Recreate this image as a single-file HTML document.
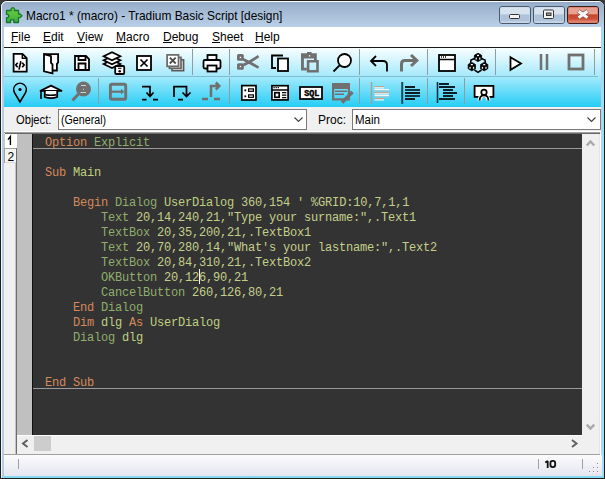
<!DOCTYPE html>
<html><head><meta charset="utf-8">
<style>
*{margin:0;padding:0;box-sizing:border-box}
html,body{width:605px;height:479px;overflow:hidden;background:#3a3a3a}
body{position:relative;font-family:"Liberation Sans",sans-serif;font-size:12px;color:#000}
.a{position:absolute}
#frame{left:0;top:0;width:605px;height:479px;border:1px solid #1c1c1c;border-radius:7px 7px 0 0;background:#b4cce4}
#hl{left:1px;top:1px;width:603px;height:477px;border-top:1px solid #fff;border-left:1px solid #f4f8fc;border-radius:6px 6px 0 0}
#rfr{left:601px;top:27px;width:3px;height:451px;background:linear-gradient(90deg,#b8d4e8 0,#b8d4e8 1px,#a0dcf8 1px)}
#rfr2{left:599px;top:134px;width:2px;height:321px;background:linear-gradient(90deg,#e2e6ea 0,#e2e6ea 1px,#fff 1px)}
#bfr{left:2px;top:476px;width:602px;height:2px;background:#88d8f4}
#tbar{left:2px;top:2px;width:602px;height:25px;border-radius:5px 5px 0 0;background:linear-gradient(#96adc9,#bad0e8)}
#title{left:26px;top:9px;font-size:11.9px;color:#000;white-space:nowrap}
#client{left:4px;top:27px;width:597px;height:449px;background:#f0f0f0}
#menu{left:4px;top:27px;width:597px;height:20px;background:#fff}
#menu span{position:absolute;top:3px}
#menu u{text-decoration:none;position:relative}
#menu u:after{content:"";position:absolute;left:0;right:0;top:12px;height:1px;background:#000}
#mline{left:4px;top:47px;width:597px;height:1px;background:#1a1a1a}
#tb1{left:4px;top:48px;width:597px;height:29px;background:linear-gradient(#f8feff,#a6e9fb 28px,#a2eafc 28px)}
#tbl{left:4px;top:76px;width:594px;height:1px;background:#80bccf}
#tb2{left:4px;top:77px;width:597px;height:30px;background:linear-gradient(#a2eafc,#26cdf5)}
#objbar{left:4px;top:107px;width:597px;height:25px;background:#f0f0f0}
.combo{position:absolute;top:109px;height:21px;background:#fff;border:1px solid #7a7a7a}
.lbl{position:absolute;white-space:nowrap;transform-origin:0 0}
#edtop1{left:4px;top:131px;width:597px;height:1px;background:#fff}
#edtop2{left:4px;top:132px;width:596px;height:1px;background:#a0a0a0}
#edtop3{left:5px;top:133px;width:595px;height:1px;background:#696969}
#tabs{left:4px;top:134px;width:12px;height:320px;background:#f0f0f0}
#gut{left:16px;top:134px;width:16px;height:301px;background:#c0c0c0;border-left:1px solid #808080}
#ed{left:32px;top:134px;width:550px;height:301px;background:#333;overflow:hidden;border-left:1px solid #101010}
#code{position:absolute;left:12px;top:2px;font-family:"Liberation Mono",monospace;font-size:12px;letter-spacing:-0.2px;line-height:15px;white-space:pre;color:#c8d48c}
.sep{position:absolute;left:0px;width:549px;height:1px;background:#9a9a9a}
.k{color:#d4895a}.g{color:#90ae6c}.l{color:#bfd181}.n{color:#c4d08a}
#vs{left:582px;top:134px;width:17px;height:301px;background:#f0f0f0}
#hs{left:17px;top:435px;width:582px;height:19px;background:linear-gradient(90deg,#fff 0,#fff 565px,#f0f0f0 565px) top/100% 1px no-repeat,#f0f0f0}
#hsline{left:4px;top:454px;width:596px;height:1px;background:#a0a0a0}
#status{left:4px;top:455px;width:598px;height:21px;background:linear-gradient(#fcfcfd,#e4e5ef)}
svg{position:absolute;left:0;top:0}
</style></head><body>
<div id="frame" class="a"></div>
<div id="hl" class="a"></div>
<div id="rfr" class="a"></div>
<div id="bfr" class="a"></div>
<div id="tbar" class="a"></div>
<div id="title" class="a">Macro1 * (macro) - Tradium Basic Script [design]</div>
<div id="client" class="a"></div>
<div id="menu" class="a">
<span style="left:7px"><u>F</u>ile</span>
<span style="left:39px"><u>E</u>dit</span>
<span style="left:73px"><u>V</u>iew</span>
<span style="left:112px"><u>M</u>acro</span>
<span style="left:159px"><u>D</u>ebug</span>
<span style="left:208px"><u>S</u>heet</span>
<span style="left:251px"><u>H</u>elp</span>
</div>
<div id="mline" class="a"></div>
<div id="tb1" class="a"></div>
<div id="tbl" class="a"></div>
<div id="tb2" class="a"></div>
<div id="objbar" class="a"></div>
<div class="lbl" style="left:16px;top:113px;transform:scaleX(0.93)">Object:</div>
<div class="combo" style="left:58px;width:249px"><span class="lbl" style="left:2px;top:3px;transform:scaleX(0.89)">(General)</span></div>
<div class="lbl" style="left:318px;top:113px;transform:scaleX(1.0)">Proc:</div>
<div class="combo" style="left:352px;width:249px"><span class="lbl" style="left:1.5px;top:3px;transform:scaleX(0.96)">Main</span></div>
<div id="edtop1" class="a"></div>
<div id="edtop2" class="a"></div>
<div id="edtop3" class="a"></div>
<div id="tabs" class="a"></div>
<div id="gut" class="a"></div>
<div id="ed" class="a">
<div class="sep" style="top:14px"></div>
<div class="sep" style="top:254px"></div>
<div id="code"><span class="k">Option</span> <span class="g">Explicit</span>

<span class="k">Sub</span> <span class="l">Main</span>

    <span class="k">Begin</span> <span class="g">Dialog</span> <span class="l">UserDialog</span> <span class="n">360,154 ' %GRID:10,7,1,1</span>
        <span class="g">Text</span> <span class="n">20,14,240,21,"Type your surname:",.Text1</span>
        <span class="g">TextBox</span> <span class="n">20,35,200,21,.TextBox1</span>
        <span class="g">Text</span> <span class="n">20,70,280,14,"What's your lastname:",.Text2</span>
        <span class="g">TextBox</span> <span class="n">20,84,310,21,.TextBox2</span>
        <span class="g">OKButton</span> <span class="n">20,126,90,21</span>
        <span class="g">CancelButton</span> <span class="n">260,126,80,21</span>
    <span class="k">End</span> <span class="g">Dialog</span>
    <span class="k">Dim</span> <span class="l">dlg</span> <span class="k">As</span> <span class="l">UserDialog</span>
    <span class="g">Dialog</span> <span class="l">dlg</span>


<span class="k">End</span> <span class="k">Sub</span></div>
</div>
<div id="vs" class="a"></div>
<div id="rfr2" class="a"></div>
<div id="hs" class="a"></div>
<div id="hsline" class="a"></div>
<div id="status" class="a"></div>


<svg width="605" height="479" viewBox="0 0 605 479">
<defs><linearGradient id="pg" x1="0" y1="0" x2="0" y2="1"><stop offset="0" stop-color="#5cc844"/><stop offset="0.5" stop-color="#58c03c"/><stop offset="1" stop-color="#34a844"/></linearGradient><linearGradient id="cg" x1="0" y1="0" x2="0" y2="1"><stop offset="0" stop-color="#c44428"/><stop offset="0.55" stop-color="#cc5036"/><stop offset="1" stop-color="#e89480"/></linearGradient></defs>
<!-- app icon -->
<path d="M6.5,10.5 H11 V9 Q12.8,6.2 14.6,9 V10.5 H18.5 V14 H20 L22,15.8 L20,17.6 H18.5 V22.5 H13.8 V19.8 H10.6 V22.5 H6.5 V17.6 H8 Q9.6,16 8,14.4 H6.5 Z" fill="url(#pg)" stroke="#17782a" stroke-width="1.3" stroke-linejoin="round"/>
<!-- caption buttons -->
<g stroke="#4a5a6c" stroke-width="1">
<rect x="499.5" y="6.5" width="31" height="17" rx="2.5" fill="#c7d7e8"/>
<rect x="533.5" y="6.5" width="31" height="17" rx="2.5" fill="#c7d7e8"/>
<rect x="567.5" y="6.5" width="31" height="17" rx="2.5" fill="#d46a52" stroke="#3a1a1a"/>
</g>
<rect x="500.5" y="7.5" width="29" height="7" fill="#d6e2ee"/>
<rect x="500.5" y="14.5" width="29" height="7" fill="#aec3da"/><rect x="500.5" y="21.5" width="29" height="1" fill="#c4d6e8"/>
<rect x="534.5" y="7.5" width="29" height="7" fill="#d6e2ee"/>
<rect x="534.5" y="14.5" width="29" height="7" fill="#aec3da"/><rect x="534.5" y="21.5" width="29" height="1" fill="#c4d6e8"/>
<rect x="568.5" y="7.5" width="29" height="7" fill="#e8a292"/>
<rect x="568.5" y="14.5" width="29" height="8" fill="url(#cg)"/>
<rect x="509.5" y="14.5" width="10" height="4" rx="1" fill="#f4f4f4" stroke="#333" stroke-width="1"/>
<rect x="543.5" y="10" width="10" height="8.5" rx="1" fill="#f4f4f4" stroke="#333" stroke-width="1"/>
<rect x="546.5" y="13" width="4.5" height="2.5" fill="#9a9a9a" stroke="#333" stroke-width="1"/>
<path d="M578.3,11 L587.7,17.8 M587.7,11 L578.3,17.8" stroke="#8a5c54" stroke-width="4.4"/>
<path d="M578.6,11.2 L587.4,17.6 M587.4,11.2 L578.6,17.6" stroke="#f8f8f8" stroke-width="3"/>

<!-- toolbar separators -->
<g fill="#8a9ea6">
<rect x="192" y="49" width="1" height="26"/><rect x="229" y="49" width="1" height="26"/>
<rect x="359" y="49" width="1" height="26"/><rect x="427" y="49" width="1" height="26"/>
<rect x="495" y="49" width="1" height="26"/><rect x="594" y="49" width="1" height="26"/>
<rect x="98" y="78" width="1" height="26"/><rect x="229" y="78" width="1" height="26"/>
<rect x="359" y="78" width="1" height="26"/><rect x="427" y="78" width="1" height="26"/>
<rect x="464" y="78" width="1" height="26"/>
</g>

<g fill="#fff" stroke="#000" stroke-width="1.8" stroke-linejoin="miter">
<!-- doc code -->
<path d="M13.6,53.9 H22.5 L26.7,58.1 V71.6 H13.6 Z"/>
<path d="M22.3,54 V58.3 H26.6" fill="none" stroke-width="1.4"/>
<path d="M17.7,62.8 L15.8,65 L17.7,67.2 M22.2,62.8 L24.1,65 L22.2,67.2 M20.9,61.2 L19,69.6" fill="none" stroke-width="1.7"/>
<!-- open -->
<path d="M44,54.2 H58.1 V62.5 L56.9,63.9 V70.5 H52.8"/>
<path d="M44,54.2 L51,56.2 V62.8 L52.5,64.4 V73.3 L44,71.3 Z"/>
<!-- save -->
<path d="M75,56 H86 L89,59 V70 H75 Z"/>
<path d="M78.5,56 V60 H85.5 V56 M78.5,70 V63.5 H85.5 V70" fill="none" stroke-width="1.8"/>
<!-- layers -->
<path d="M103.6,64 L112,60 L120.4,64 L112,68 Z" stroke-width="1.7"/>
<path d="M103.6,60.2 L112,56.2 L120.4,60.2 L112,64.2 Z" stroke-width="1.7"/>
<path d="M103.6,56.3 L112,52.3 L120.4,56.3 L112,60.3 Z" stroke-width="1.7"/>
<rect x="115.2" y="66" width="9" height="8" rx="1" stroke-width="1.8"/>
<circle cx="119.7" cy="71.2" r="1.3" fill="#000" stroke="none"/>
<path d="M118,68.3 H121.5" stroke-width="1"/>
<!-- x box -->
<rect x="137" y="56" width="14" height="14"/>
<path d="M140.5,59.5 L147.5,66.5 M147.5,59.5 L140.5,66.5" stroke-width="1.7"/>
<!-- printer -->
<rect x="207.5" y="55" width="9" height="5"/>
<rect x="203.5" y="60" width="17" height="8.5" rx="1.5"/>
<rect x="207.5" y="65.5" width="9" height="6"/>
<!-- copy -->
<path d="M283,55.5 H272 V68 H276" fill="none"/>
<rect x="278" y="58.5" width="10" height="12.5"/>
<!-- search -->
<circle cx="344.5" cy="60.5" r="6.5"/>
<path d="M339.8,65.2 L333.5,71.5" fill="none"/>
<!-- undo -->
<path d="M376,56 L371,61 L376,66 M371,61 H383 Q387,61 387,65 V71.5" fill="none"/>
<!-- window -->
<rect x="439" y="55" width="16" height="16"/>
<path d="M439,59.5 H455" stroke-width="1.5"/>
<path d="M441,57 H442 M443,57 H444 M445,57 H446" stroke-width="1.5"/>
<!-- play -->
<path d="M510.5,57.2 L521,63.5 L510.5,69.8 Z"/>
</g>
<!-- cubes -->
<path d="M474.5,58.5 L471,60 L470.5,63.5 M481.5,58.5 L485,60 L485.5,63.5 M474.5,70 L478,72.3 L481.5,70" stroke="#000" stroke-width="1.6" fill="none"/>
<path d="M478,53.199999999999996 L481.64,55.3 V59.5 L478,61.6 L474.36,59.5 V55.3 Z" fill="#000" stroke="#000" stroke-width="0.8" stroke-linejoin="round"/>
<rect x="477.0" y="54.8" width="2" height="1.3" fill="#fff"/><rect x="475.6" y="57.6" width="1.3" height="2" fill="#f0f0f0"/><rect x="479.1" y="57.6" width="1.3" height="2" fill="#f0f0f0"/>
<path d="M471.8,62.39999999999999 L475.44,64.5 V68.69999999999999 L471.8,70.8 L468.16,68.69999999999999 V64.5 Z" fill="#000" stroke="#000" stroke-width="0.8" stroke-linejoin="round"/>
<rect x="470.8" y="64.0" width="2" height="1.3" fill="#fff"/><rect x="469.4" y="66.8" width="1.3" height="2" fill="#f0f0f0"/><rect x="472.9" y="66.8" width="1.3" height="2" fill="#f0f0f0"/>
<path d="M484.2,62.39999999999999 L487.84,64.5 V68.69999999999999 L484.2,70.8 L480.56,68.69999999999999 V64.5 Z" fill="#000" stroke="#000" stroke-width="0.8" stroke-linejoin="round"/>
<rect x="483.2" y="64.0" width="2" height="1.3" fill="#fff"/><rect x="481.8" y="66.8" width="1.3" height="2" fill="#f0f0f0"/><rect x="485.3" y="66.8" width="1.3" height="2" fill="#f0f0f0"/>
<!-- gray icons row 1 -->
<g fill="none" stroke="#707070" stroke-width="2">
<rect x="172" y="59.8" width="11.6" height="10.9" fill="#dcdcdc" stroke="#5a5a5a" stroke-width="1.6"/>
<rect x="169.4" y="57.4" width="11.6" height="10.9" fill="#ececec" stroke="#606060" stroke-width="1.6"/>
<rect x="167.1" y="54.9" width="11.4" height="11.4" fill="#fff" stroke="#686868" stroke-width="1.7"/>
<path d="M169.8,57.7 L175.7,63.5 M175.7,57.7 L169.8,63.5" stroke="#4a4a4a" stroke-width="1.8"/>
<path d="M243,59.3 L249,62.2 L258.6,56.2 M243,65.2 L249,62.2 L258.6,67.6" stroke-width="2.7"/>
<rect x="237" y="54" width="6.8" height="6.8" rx="1.6" fill="#707070" stroke="none"/><rect x="237" y="63.2" width="6.8" height="6.6" rx="1.6" fill="#707070" stroke="none"/>

<path d="M401.5,71.5 V64 Q401.5,60.5 405,60.5 H416 M411,55 L416.8,60.5 L411,66" stroke-width="3"/>
<path d="M541,54 V70 M547,54 V70" stroke-width="2.5"/>
<rect x="569" y="55" width="14" height="14" stroke-width="2.8"/>
</g>
<path d="M301,53.3 H316.8 V60 H314 V58.4 H303.9 V67.7 H306.8 V70.5 H301 Z M307,52 H311.6 V53.5 H307 Z" fill="#707070"/>
<path d="M306.8,60 H318.8 V72.6 H306.8 Z M309.4,62.6 V70 H316.2 V62.6 Z" fill="#707070" fill-rule="evenodd"/>
<rect x="308.9" y="55.2" width="1.3" height="1.3" fill="#fff"/>
<rect x="239.8" y="56.8" width="1.3" height="1.3" fill="#fff"/><rect x="239.8" y="65.9" width="1.3" height="1.3" fill="#fff"/>

<!-- row 2 black icons -->
<g fill="none" stroke="#000" stroke-width="1.75">
<path d="M20,102 L14.6,92.8 A6.3,6.3 0 1 1 25.4,92.8 Z" fill="none" stroke-width="1.6"/>
<path d="M142,86.5 H150 V96 M146.5,92.5 L150,96.5 L153.5,92.5 M142,99.5 H146.5 M153,99.5 H158"/>
<path d="M174,97 V86.5 H186.5 V96 M182.5,92.5 L186.5,96.5 L190.5,92.5 M178,99.5 H183"/>
<rect x="241.8" y="85.6" width="14.2" height="14.4" fill="#fff" stroke-width="1.7"/>
<rect x="248.6" y="88.9" width="4.8" height="2.4" stroke-width="1.2"/>
<rect x="248.6" y="94.9" width="4.8" height="2.4" stroke-width="1.2"/>
<rect x="271.9" y="85.7" width="16.2" height="14.2" fill="#fff" stroke-width="1.7"/>
<path d="M272,90 H288" stroke-width="1.5"/>
<path d="M273.5,87.6 H274.7 M275.6,87.6 H276.8 M277.7,87.6 H278.9" stroke-width="1.1"/>
<rect x="274.8" y="92.7" width="4.4" height="4.6" stroke-width="1.7"/>
<path d="M282,92.6 H286.3 M282,95.1 H286.3 M282,97.6 H286.3" stroke-width="1.2"/>
<rect x="300" y="87" width="22" height="12" fill="#fff"/>
<rect x="474.6" y="85.9" width="18.8" height="11" fill="#fff" stroke-width="1.8"/>
<path d="M479.6,100.5 C479.6,96.6 481.6,95.4 484,95.4 C486.4,95.4 488.4,96.6 488.4,100.5" stroke="#fff" stroke-width="4"/>
<circle cx="484" cy="92.3" r="2.7" stroke-width="1.7" fill="#fff"/>
<path d="M479.6,100.5 C479.6,96.6 481.6,95.4 484,95.4 C486.4,95.4 488.4,96.6 488.4,100.5" stroke-width="1.7"/>
</g>
<circle cx="20" cy="89.5" r="1.6" fill="#000"/>
<rect x="244.4" y="89.4" width="1.8" height="1.8" fill="#000"/><rect x="244.4" y="95.4" width="1.8" height="1.8" fill="#000"/>
<text x="311.7" y="95.8" font-family="Liberation Mono" font-weight="bold" font-size="8.4" text-anchor="middle" stroke="#000" stroke-width="0.45">SQL</text>
<!-- grad cap -->
<path d="M40.5,90.8 L51,85.6 L61.5,90.8 Z" fill="#fff" stroke="#000" stroke-width="1.8" stroke-linejoin="round"/>
<path d="M44.8,91 V97 Q51,99.4 57.2,97 V91" fill="#fff" stroke="#000" stroke-width="1.8"/>
<path d="M45.5,94.8 Q51,95.8 56.5,94.8" stroke="#000" stroke-width="1.6" fill="none"/>
<path d="M41,90.5 V99" stroke="#000" stroke-width="1.6"/>
<!-- row 2 gray -->
<circle cx="83.5" cy="89" r="7.5" fill="#707070"/>
<path d="M78.5,94 L72.5,100.5" stroke="#707070" stroke-width="3"/>
<path d="M81,85.5 H86 M83.5,88.8 V89.8 M80.5,92.5 H86" stroke="#d0e4ea" stroke-width="0.9"/>
<g fill="none" stroke="#707070" stroke-width="2.6">
<rect x="110.4" y="84.3" width="15.3" height="15" rx="1.5" stroke-width="2.9"/>
<path d="M110,91.7 H122" stroke-width="2.2"/>
<path d="M121,88.8 L124.3,91.7 L121,94.6 Z" fill="#707070" stroke="none"/>
<path d="M211,97 V86 H218.5 M215.8,82.5 L219.3,86 L215.8,89.5 M202,99 H208 M214,99 H220" stroke-width="2.5"/>
</g>
<path d="M332,83 H350 V100.5 H332 Z M334.2,89 V98.2 H347.8 V89 Z" fill="#707070" fill-rule="evenodd"/>
<path d="M335,91.3 H347 M335,94.3 H344" stroke="#707070" stroke-width="1.6"/>
<path d="M342,102.5 L352.5,92" stroke="#707070" stroke-width="3.6"/>
<!-- align icons -->
<path d="M371.5,82 V103.8" stroke="#a8a098" stroke-width="1.5"/>
<g stroke-width="1.2">
<path d="M374.5,86.6 H384 M374.5,92.6 H389 M374.5,98.6 H384" stroke="#c0a490"/>
<path d="M374.5,87.8 H384 M374.5,93.8 H389 M374.5,99.8 H384" stroke="#f4f4f0"/>
<path d="M374.5,89.6 H389 M374.5,95.6 H389" stroke="#f0f8fa"/>
<path d="M374.5,90.8 H389 M374.5,96.8 H389" stroke="#9ccad8"/>
</g>
<path d="M402.2,82 V103.8" stroke="#1c4858" stroke-width="2"/>
<g stroke-width="2">
<path d="M405,87 H415 M405,93 H420 M405,99 H415" stroke="#111a1e"/>
<path d="M405,90 H420 M405,96 H420" stroke="#0e3848"/>
</g>
<path d="M437.5,82 V103" stroke-width="1.6" stroke="#0e3040"/>
<g stroke="#0a1e28" stroke-width="2">
<path d="M439,84 H449 M439,87 H455 M443,90 H453 M443,93 H457 M443,96 H453 M439,99 H455" stroke-width="1.8"/>
</g>

<!-- combo arrows -->
<path d="M294.5,117.5 L298.5,121.5 L302.5,117.5" fill="none" stroke="#404040" stroke-width="1.1"/>
<path d="M587.5,117.5 L591.5,121.5 L595.5,117.5" fill="none" stroke="#404040" stroke-width="1.1"/>
<!-- line tabs -->
<rect x="5" y="134" width="12" height="14" fill="#fff"/>
<rect x="4" y="134" width="1" height="14" fill="#c8c8c8"/>
<rect x="4" y="148" width="12" height="15" fill="#f4f4f4"/>
<rect x="4" y="148" width="1" height="15" fill="#a0a0a0"/>
<rect x="4" y="148" width="12" height="1" fill="#a0a0a0"/>
<rect x="5" y="162" width="11" height="1" fill="#d8d8d8"/>
<rect x="15" y="163" width="1" height="291" fill="#c4c4c4"/><rect x="16" y="148" width="1" height="306" fill="#6c6c6c"/>
<path d="M8,139.6 L10.4,136.6 V145" fill="none" stroke="#000" stroke-width="1.4"/>
<text x="7.4" y="161" font-family="Liberation Sans" font-size="12">2</text>
<!-- scroll arrows -->
<path d="M586.8,145.6 L590.5,141.4 L594.2,145.6" fill="none" stroke="#a8a8a8" stroke-width="2.3"/>
<path d="M586.8,424.6 L590.5,428.6 L594.2,424.6" fill="none" stroke="#a8a8a8" stroke-width="2.3"/>
<path d="M27.5,440 L23,443.5 L27.5,447" fill="none" stroke="#606060" stroke-width="2"/>
<path d="M572,440 L576.5,443.5 L572,447" fill="none" stroke="#606060" stroke-width="2"/>
<rect x="34" y="436" width="17" height="15" fill="#cdcdcd"/>
<!-- caret -->
<rect x="199" y="269" width="1" height="15" fill="#f4f4f4"/>
<!-- status -->
<path d="M545.3,462.6 L547.7,461 V468" fill="none" stroke="#111" stroke-width="1.8" stroke-linejoin="bevel"/>
<rect x="550.4" y="460.9" width="4.8" height="6.2" rx="2.3" fill="none" stroke="#111" stroke-width="1.8"/>
<rect x="18" y="459" width="1" height="10" fill="#a0a0a0"/>
<rect x="538" y="459" width="1" height="10" fill="#a0a0a0"/>
<rect x="582" y="459" width="1" height="10" fill="#a0a0a0"/>
<g fill="#fff"><rect x="598" y="464" width="1" height="1"/><rect x="594" y="468" width="1" height="1"/><rect x="598" y="468" width="1" height="1"/><rect x="590" y="472" width="1" height="1"/><rect x="594" y="472" width="1" height="1"/><rect x="598" y="472" width="1" height="1"/></g>
<g fill="#8a8a8a"><rect x="597" y="463" width="1" height="1"/><rect x="593" y="467" width="1" height="1"/><rect x="597" y="467" width="1" height="1"/><rect x="589" y="471" width="1" height="1"/><rect x="593" y="471" width="1" height="1"/><rect x="597" y="471" width="1" height="1"/></g>
</svg>
</body></html>
